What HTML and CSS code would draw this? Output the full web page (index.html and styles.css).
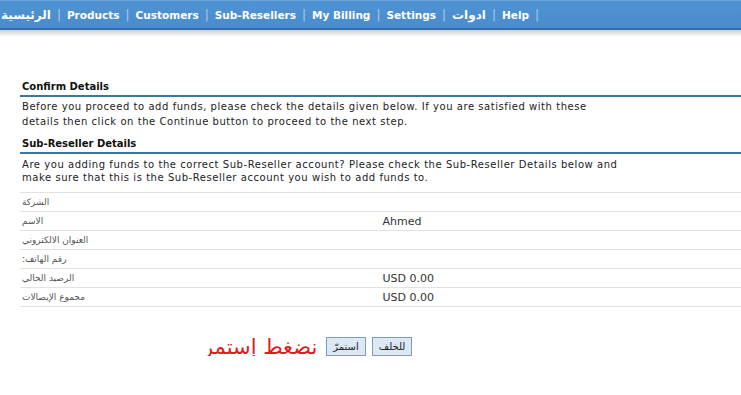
FILE: index.html
```html
<!DOCTYPE html>
<html lang="en">

<head>
    <meta charset="UTF-8">
    <title>Add Funds - Confirm Details</title>
    <link rel="stylesheet" href="styles.css">
</head>

<body>
    <div class="topnav">
        <a href="#" class="ar">الرئيسية</a><span class="sep">|</span>
        <a href="#">Products</a><span class="sep">|</span>
        <a href="#">Customers</a><span class="sep">|</span>
        <a href="#">Sub-Resellers</a><span class="sep">|</span>
        <a href="#">My Billing</a><span class="sep">|</span>
        <a href="#">Settings</a><span class="sep">|</span>
        <a href="#" class="ar">ادوات</a><span class="sep">|</span>
        <a href="#">Help</a><span class="sep">|</span>
    </div>
    <div class="navshadow"></div>

    <div class="content">
        <h3 class="section-title">Confirm Details</h3>
        <p class="intro">Before you proceed to add funds, please check the details given below. If you are satisfied with these<br>
            details then click on the Continue button to proceed to the next step.</p>

        <h3 class="section-title">Sub-Reseller Details</h3>
        <p class="intro tight">Are you adding funds to the correct Sub-Reseller account? Please check the Sub-Reseller Details below and<br>
            make sure that this is the Sub-Reseller account you wish to add funds to.</p>

        <table class="details">
            <tr><td class="label">الشركة</td><td></td></tr>
            <tr><td class="label">الاسم</td><td>Ahmed</td></tr>
            <tr><td class="label">العنوان الالكتروني</td><td></td></tr>
            <tr><td class="label">:رقم الهاتف</td><td></td></tr>
            <tr><td class="label">الرصيد الحالي</td><td>USD 0.00</td></tr>
            <tr><td class="label">مجموع الإيصالات</td><td>USD 0.00</td></tr>
        </table>

        <div class="actions">
            <span class="hint">نضغط إستمر</span>
            <button type="button">استمرّ</button>
            <button type="button">للخلف</button>
        </div>
    </div>
</body>

</html>
```

FILE: styles.css
```css
body {
    margin: 0;
    font-family: "DejaVu Sans", Verdana, sans-serif;
    font-size: 10px;
    color: #222;
    background-color: #fff;
}

.topnav {
    height: 30px;
    display: flex;
    align-items: center;
    padding: 1px 0 0 1px;
    background: linear-gradient(#4f93d3, #4a8ccc);
    border-top: 1px solid #6aa3da;
    border-bottom: 2px solid #336ea6;
    box-sizing: border-box;
}

.topnav a {
    color: #fff;
    font-weight: bold;
    font-size: 10.5px;
    text-decoration: none;
}

.topnav a.ar {
    font-size: 12px;
}

.topnav .sep {
    color: #a9cbed;
    margin: 0 6px;
    font-size: 12px;
}

.navshadow {
    height: 7px;
    background: linear-gradient(#cfcfcf, #fff);
}

.content {
    padding: 43px 0 0 20px;
}

.section-title {
    margin: 0;
    padding: 0 0 2px 2px;
    font-size: 10px;
    line-height: 13px;
    color: #111;
    border-bottom: 2px solid #3a78a0;
}

.intro {
    margin: 2px 0 8px 2px;
    line-height: 15px;
    letter-spacing: 0.55px;
}

.intro.tight {
    line-height: 13px;
    margin: 4px 0 8px 2px;
}

.details {
    width: 100%;
    border-collapse: collapse;
    border-top: 1px solid #e2e2e2;
}

.details td {
    width: 50%;
    height: 18px;
    padding: 0 2px;
    border-bottom: 1px solid #e2e2e2;
    font-size: 11px;
    color: #333;
}

.details td.label {
    font-size: 9px;
    color: #555;
}

.actions {
    display: flex;
    align-items: center;
    padding: 30px 0 0 183px;
}

.hint {
    color: #e21a1a;
    font-size: 21px;
    line-height: 18px;
    margin-right: 9px;
}

.actions button {
    font-family: "DejaVu Sans", sans-serif;
    font-size: 10px;
    height: 19px;
    padding: 0 6px;
    margin-right: 6px;
    background-color: #dce8f4;
    border: 1px solid #7f9db9;
    color: #222;
}
```
